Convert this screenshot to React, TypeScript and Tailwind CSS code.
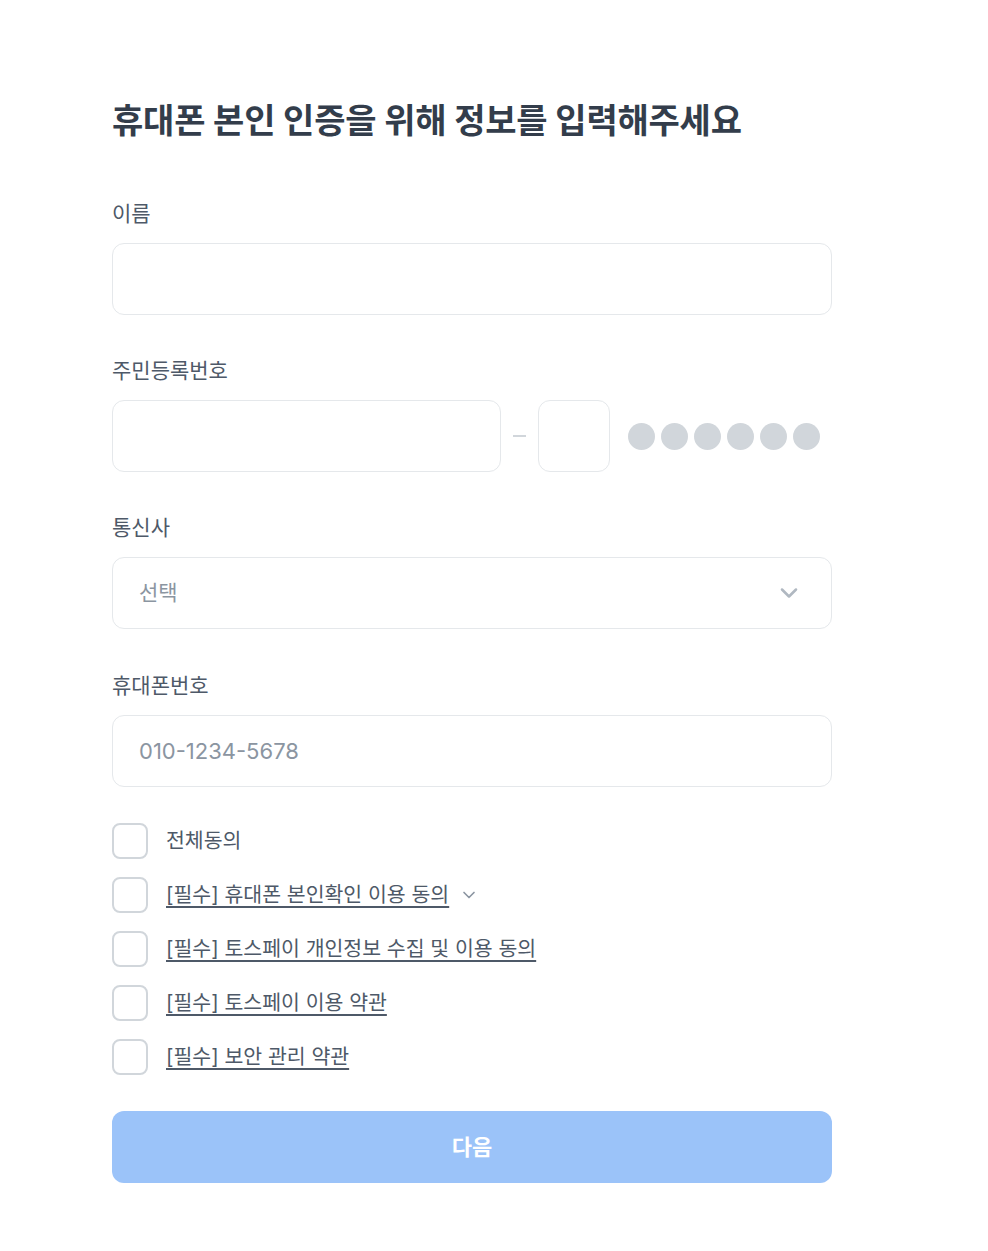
import { ChevronDown } from 'lucide-react';

const font = { fontFamily: 'Inter, "Noto Sans CJK KR", sans-serif' };

function Label({ children }: { children: string }) {
  return <div className="h-7 text-[21px] leading-7 text-[#4e5968]">{children}</div>;
}

function Box({ className = '', children }: { className?: string; children?: React.ReactNode }) {
  return (
    <div className={`flex h-[72px] items-center rounded-xl border-[1.5px] border-[#e5e8eb] bg-white ${className}`}>
      {children}
    </div>
  );
}

const terms = [
  { text: '[필수] 휴대폰 본인확인 이용 동의', more: true },
  { text: '[필수] 토스페이 개인정보 수집 및 이용 동의' },
  { text: '[필수] 토스페이 이용 약관' },
  { text: '[필수] 보안 관리 약관' },
];

export default function App() {
  return (
    <div className="min-h-[1251px] bg-white" style={font}>
      <div className="w-[720px] ml-[112px] pt-[99px]">
        <h1 className="h-11 text-[34px] leading-[44px] font-bold tracking-[-0.2px] text-[#333d4b]">
          휴대폰 본인 인증을 위해 정보를 입력해주세요
        </h1>

        <div className="mt-[57px] flex flex-col gap-[42px]">
          <div className="flex flex-col gap-[15px]">
            <Label>이름</Label>
            <Box />
          </div>

          <div className="flex flex-col gap-[15px]">
            <Label>주민등록번호</Label>
            <div className="flex items-center">
              <Box className="w-[389px]" />
              <div className="mx-[12px] h-[2px] w-[13px] bg-[#d1d6db]" />
              <Box className="w-[72px]" />
              <div className="ml-[18px] flex gap-[6px]">
                {[0, 1, 2, 3, 4, 5].map((i) => (
                  <span key={i} className="h-[27px] w-[27px] rounded-full bg-[#d1d6db]" />
                ))}
              </div>
            </div>
          </div>

          <div className="flex flex-col gap-[15px]">
            <Label>통신사</Label>
            <Box className="justify-between pl-[26px] pr-[28px]">
              <span className="text-[21px] text-[#8b95a1]">선택</span>
              <ChevronDown className="h-7 w-7 text-[#b0b8c1]" strokeWidth={2.2} />
            </Box>
          </div>

          <div className="mt-px flex flex-col gap-[15px]">
            <Label>휴대폰번호</Label>
            <Box className="px-[26px]">
              <span className="text-[22px] text-[#8b95a1]">010-1234-5678</span>
            </Box>
          </div>
        </div>

        <div className="mt-[36px] flex flex-col gap-[18px]">
          <div className="flex items-center gap-[18px]">
            <span className="h-9 w-9 rounded-lg border-2 border-[#d1d6db]" />
            <span className="text-[20.5px] text-[#4e5968]">전체동의</span>
          </div>
          {terms.map((t) => (
            <div key={t.text} className="flex items-center gap-[18px]">
              <span className="h-9 w-9 rounded-lg border-2 border-[#d1d6db]" />
              <span className="text-[20.5px] text-[#4e5968] underline underline-offset-[4px]">
                {t.text}
              </span>
              {t.more && <ChevronDown className="-ml-[8px] h-5 w-5 text-[#8b95a1]" strokeWidth={2} />}
            </div>
          ))}
        </div>

        <button className="mt-[36px] flex h-[72px] w-full items-center justify-center rounded-xl bg-[#9bc3f9] text-[22px] font-bold text-white">
          다음
        </button>
      </div>
    </div>
  );
}
